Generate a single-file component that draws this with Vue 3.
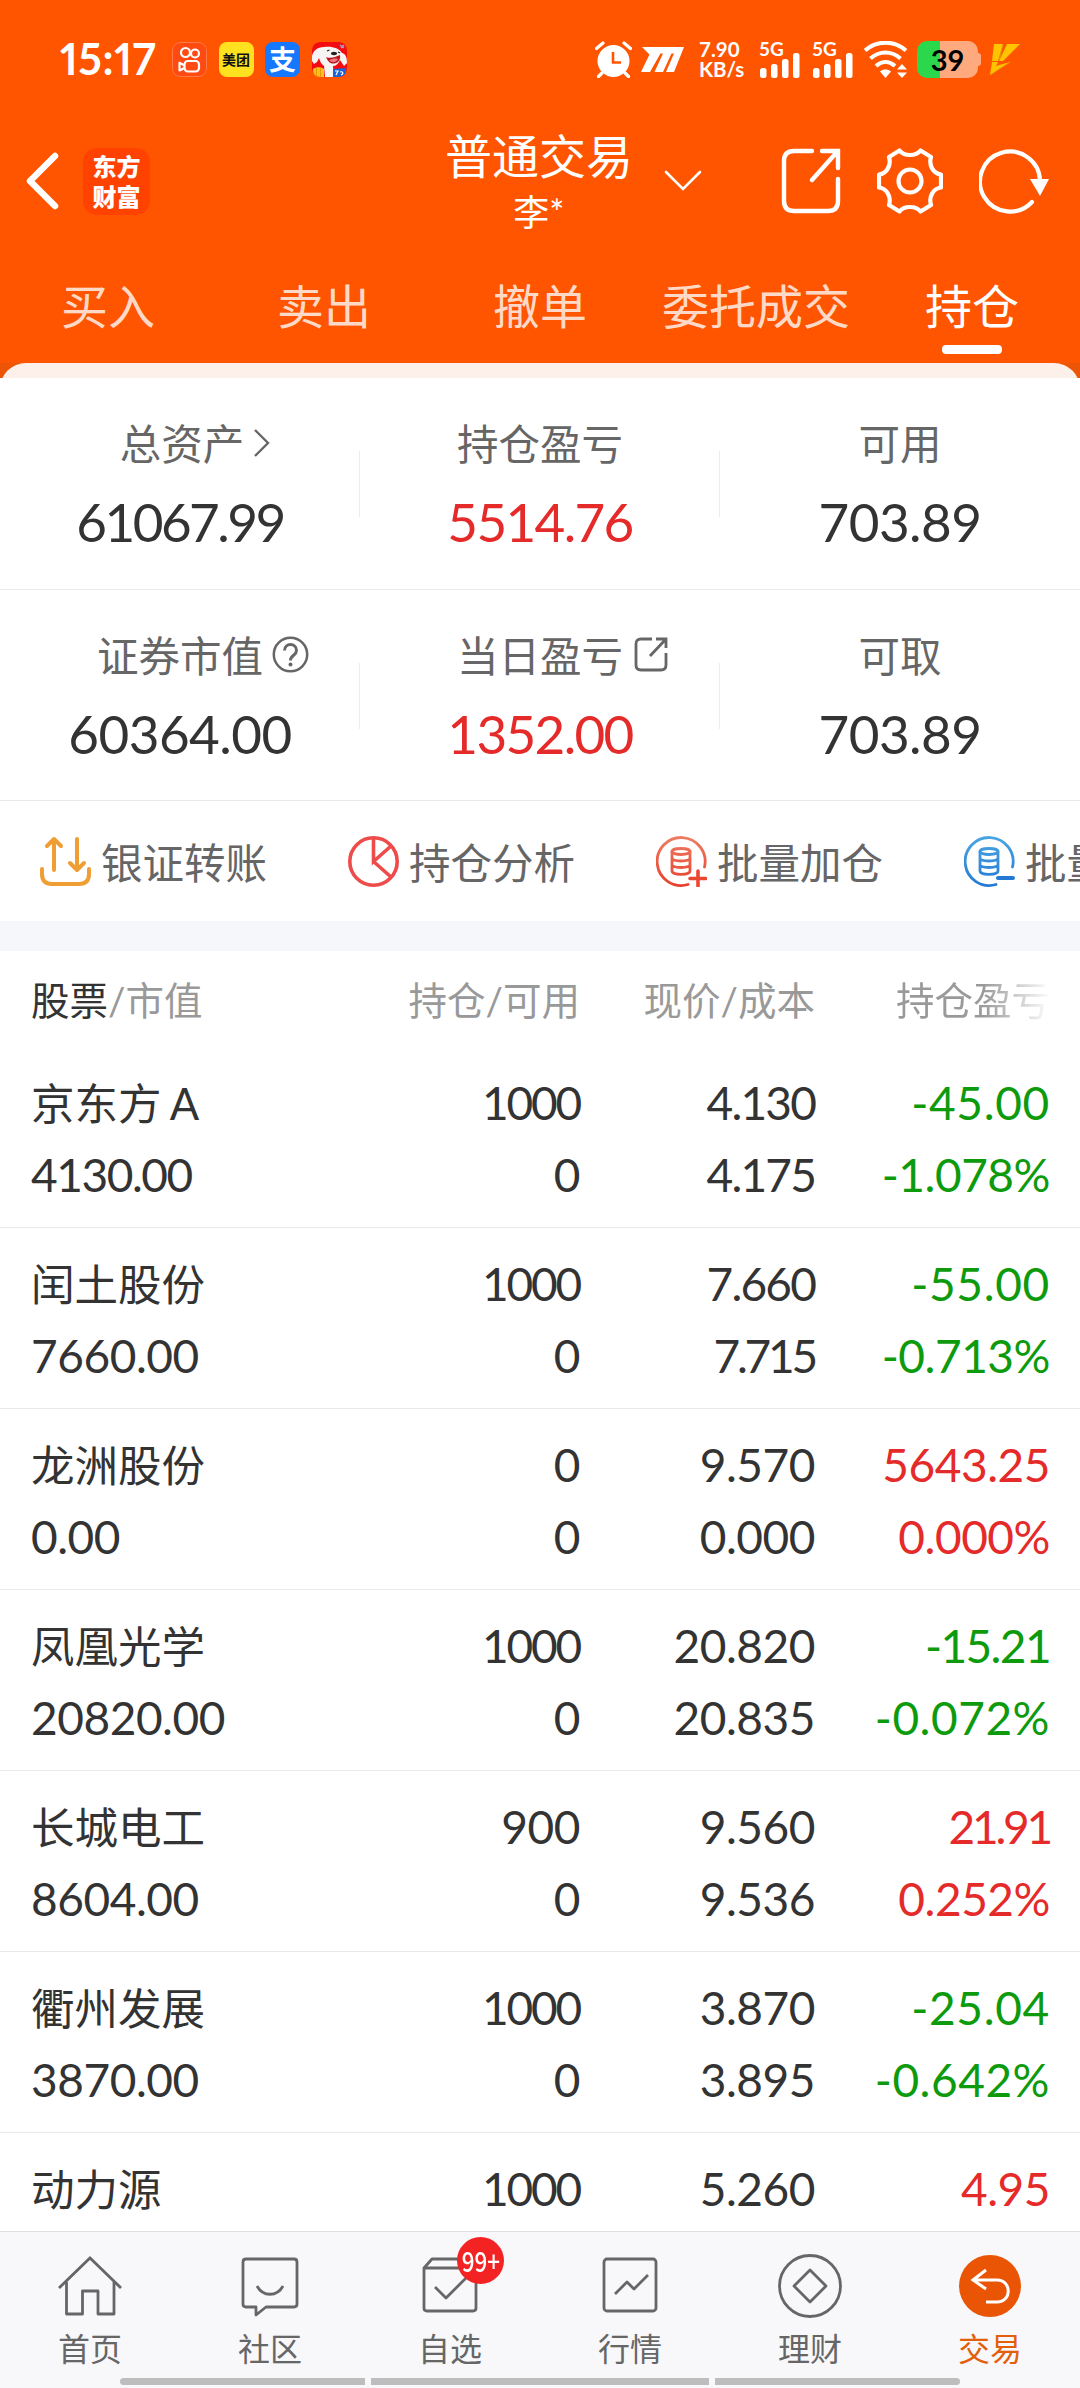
<script setup>
const tabs = ['买入', '卖出', '撤单', '委托成交', '持仓']

const summary = [
  [
    { label: '总资产', value: '61067.99', icon: 'arrow' },
    { label: '持仓盈亏', value: '5514.76', tone: 'up' },
    { label: '可用', value: '703.89' },
  ],
  [
    { label: '证券市值', value: '60364.00', icon: 'help' },
    { label: '当日盈亏', value: '1352.00', tone: 'up', icon: 'share' },
    { label: '可取', value: '703.89' },
  ],
]

const actions = [
  { key: 'transfer', label: '银证转账' },
  { key: 'pie', label: '持仓分析' },
  { key: 'plus', label: '批量加仓' },
  { key: 'minus', label: '批量减仓' },
]

const stocks = [
  { name: '京东方 A', market: '4130.00', hold: '1000', usable: '0', price: '4.130', cost: '4.175', profit: '-45.00', rate: '-1.078%', tone: 'down' },
  { name: '闰土股份', market: '7660.00', hold: '1000', usable: '0', price: '7.660', cost: '7.715', profit: '-55.00', rate: '-0.713%', tone: 'down' },
  { name: '龙洲股份', market: '0.00', hold: '0', usable: '0', price: '9.570', cost: '0.000', profit: '5643.25', rate: '0.000%', tone: 'up' },
  { name: '凤凰光学', market: '20820.00', hold: '1000', usable: '0', price: '20.820', cost: '20.835', profit: '-15.21', rate: '-0.072%', tone: 'down' },
  { name: '长城电工', market: '8604.00', hold: '900', usable: '0', price: '9.560', cost: '9.536', profit: '21.91', rate: '0.252%', tone: 'up' },
  { name: '衢州发展', market: '3870.00', hold: '1000', usable: '0', price: '3.870', cost: '3.895', profit: '-25.04', rate: '-0.642%', tone: 'down' },
  { name: '动力源', market: '', hold: '1000', usable: '', price: '5.260', cost: '', profit: '4.95', rate: '', tone: 'up' },
]

const navs = [
  { key: 'home', label: '首页' },
  { key: 'chat', label: '社区' },
  { key: 'pick', label: '自选', badge: '99+' },
  { key: 'quote', label: '行情' },
  { key: 'wealth', label: '理财' },
  { key: 'trade', label: '交易' },
]

// tighten numbers holding a narrow "1" or "7.", loosen the ones with a minus sign
function tracking(value, step = 0.15) {
  if (!value) return {}
  const narrow = (value.match(/1|7\./g) || []).length
  const wide = value.startsWith('-') ? 1 : 0
  const em = ((wide - narrow) * step) / value.length - 0.01
  return { letterSpacing: `${em.toFixed(4)}em` }
}
</script>

<template>
  <div class="page">
    <header class="top">
      <div class="status-bar">
        <span class="clock">15:17</span>
        <div class="app-icons">
          <svg class="app-icon" viewBox="0 0 35 35">
            <rect x=".5" y=".5" width="34" height="34" rx="8" fill="#ff4a12" stroke="#ff7a48" />
            <g fill="none" stroke="#fff" stroke-width="2.2">
              <circle cx="13.500" cy="10.500" r="4.500" />
              <circle cx="23" cy="11.500" r="4" />
              <rect x="12.500" y="19" width="14.500" height="10.500" rx="3.400" />
              <path d="M12.500 23.500 7.500 20.700v7.800l5-2.600" stroke-linejoin="round" />
            </g>
          </svg>
          <span class="app-icon meituan">美团</span>
          <span class="app-icon alipay">支</span>
          <svg class="app-icon" viewBox="0 0 35 35">
            <rect width="35" height="35" rx="8" fill="#f30b12" />
            <path d="M0 14c1-5 5-9 12-9 8-1 15 1 18 6 4 1 5 5 5 10l-3 3-4-6c-2 4-4 6-7 6l1 11H13l-1-11c-3-2-4-5-5-8l-2 4-3 2-2-3z" fill="#f7f4f4" />
            <path d="M14 15c5 2 9 0 14-2 1 6-3 8.500-7 8.500-3 0-5-2-7-6.500z" fill="#b8161c" />
            <path d="M17 18.500c3-2 6-2.500 9-1.500-2 4-6 4-9 1.500z" fill="#f0747c" />
            <ellipse cx="22" cy="11.500" rx="3" ry="1.700" fill="#222" />
            <path d="M15 9l2.500-1M26 10l2 1" stroke="#222" stroke-width="1.300" />
            <path d="M1 27c3-2.500 8-2.500 11 0v8H6c-4 0-5-4-5-8z" fill="#ffbe1d" />
            <path d="M4.500 26v9M8.500 26v9" stroke="#e79b0a" />
            <path d="M21 27l13-1c1 5-2 9-7 9h-6z" fill="#1d63d8" />
            <path d="M23 29h3l-2 4M28 30c3-1 4 2 1 3" fill="none" stroke="#fff" stroke-width="1.200" />
            <path d="M28 3l4 3m0-3-3 3" stroke="#9fa8d8" stroke-width="1.500" />
          </svg>
        </div>
        <div class="status-right">
          <svg class="alarm" width="37" height="37" viewBox="0 0 37 37">
            <circle cx="18.500" cy="20" r="16" fill="#fff" />
            <path d="M1.500 7.500 8 2M35.500 7.500 29 2M7 32l-3.500 3.500M30 32l3.500 3.500" stroke="#fff" stroke-width="3.200" stroke-linecap="round" />
            <path d="M18 11v10.500h8" fill="none" stroke="#ff5500" stroke-width="2.600" />
          </svg>
          <svg class="mmm" width="43" height="25" viewBox="0 0 43 25" fill="#fff">
            <path d="M1 0H43L33 25H25L33 6.500H30.500L22 25H13.500L22 6.500H19.500L9 25H0L8.500 7.500z" />
          </svg>
          <div class="net-speed"><b>7.90</b><b>KB/s</b></div>
          <div v-for="n in 2" :key="n" class="signal">
            <b>5G</b>
            <svg width="41" height="25" viewBox="0 0 41 25" fill="#fff">
              <rect x="1" y="15" width="6.500" height="10" rx="2.500" />
              <rect x="12" y="11" width="6.500" height="14" rx="2.500" />
              <rect x="23" y="6" width="6.500" height="19" rx="2.500" />
              <rect x="34" y="0" width="6.500" height="25" rx="2.500" />
            </svg>
          </div>
          <svg class="wifi" width="44" height="37" viewBox="0 0 44 37">
            <g fill="none" stroke="#fff" stroke-width="4">
              <path d="M1 9.500C13-1 30-1 42 9.500" />
              <path d="M6.500 17.500c9-8 21-8 30 0" />
              <path d="M12 25c6-5.500 13-5.500 19 0" />
            </g>
            <path d="M16 30.500c3.500-2.600 7.500-2.600 11 0L21.500 37zM33 28.500l5-5.500 5 5.500zM33 31.500h10L38 37z" fill="#fff" />
          </svg>
          <div class="battery"><b>39</b></div>
          <svg class="bolt" width="30" height="31" viewBox="0 0 30 31">
            <path d="M4 0H13L8 17H2zM17 0H30L13 17H9zM2 18H8L6 22 20 18 0 31z" fill="#ffc400" />
            <path d="M13 0 9 17M20 18 0 31" stroke="#e89a00" />
          </svg>
        </div>
      </div>

      <div class="title-bar">
        <svg class="back" width="33" height="58" viewBox="0 0 33 58">
          <path d="M29 4 4 29 29 54" fill="none" stroke="#fff" stroke-width="6.500" stroke-linecap="round" stroke-linejoin="round" />
        </svg>
        <div class="brand">东方<br>财富</div>
        <div class="account">
          <h1>普通交易</h1>
          <p>李*</p>
        </div>
        <svg class="caret" width="38" height="22" viewBox="0 0 38 22">
          <path d="M2 2 19 19 36 2" fill="none" stroke="#fff" stroke-width="2.600" stroke-linecap="round" />
        </svg>
        <div class="tools">
          <svg width="60" height="66" viewBox="0 0 60 66" fill="none" stroke="#fff" stroke-width="4.400" stroke-linecap="round">
            <path d="M31 3H13Q3 3 3 13V53Q3 63 13 63H47Q57 63 57 53V31" />
            <path d="M41 3H57V20M56 4 31 32" />
          </svg>
          <svg width="66" height="66" viewBox="0 0 66 66" fill="none" stroke="#fff" stroke-width="4.200" stroke-linejoin="round">
            <path d="M22.500 2.500C27 8.500 39 8.500 43.500 2.500L54 9C51.500 17 56 25.500 64 26.500V39.500C56 40.500 51.500 49 54 57L43.500 63.500C39 57.500 27 57.500 22.500 63.500L12 57C14.500 49 10 40.500 2 39.500V26.500C10 25.500 14.500 17 12 9Z" />
            <circle cx="33" cy="33" r="11.500" />
          </svg>
          <svg width="71" height="66" viewBox="0 0 71 66" fill="none">
            <path d="M53 54A30 30 0 1 1 61 33" stroke="#fff" stroke-width="4.200" stroke-linecap="round" />
            <path d="M51 31H70L61 48Z" fill="#fff" />
          </svg>
        </div>
      </div>

      <nav class="tabs">
        <span v-for="tab in tabs" :key="tab" class="tab" :class="{ active: tab === '持仓' }">{{ tab }}</span>
      </nav>
      <div class="sheet-edge"><div class="sheet-top" /></div>
    </header>

    <section v-for="(row, i) in summary" :key="i" class="summary-row">
      <div v-for="cell in row" :key="cell.label" class="summary-cell">
        <div class="summary-label">
          <span>{{ cell.label }}</span>
          <svg v-if="cell.icon === 'arrow'" class="label-arrow" width="18" height="30" viewBox="0 0 18 30">
            <path d="M2 2 15 15 2 28" fill="none" stroke="#666" stroke-width="2.400" />
          </svg>
          <svg v-else-if="cell.icon === 'help'" class="label-help" width="37" height="37" viewBox="0 0 37 37" fill="none" stroke="#666" stroke-width="2.500">
            <circle cx="18.500" cy="18.500" r="16.700" />
            <path d="M12.500 14.500c0-8 12-8 12 0 0 5-6 4.500-6 10" stroke-width="3" />
            <circle cx="18.500" cy="28.500" r="2" fill="#666" stroke="none" />
          </svg>
          <svg v-else-if="cell.icon === 'share'" class="label-share" width="34" height="35" viewBox="0 0 34 35" fill="none" stroke="#666" stroke-width="2.800">
            <path d="M18 2H7Q2 2 2 7V28Q2 33 7 33H27Q32 33 32 28V16" />
            <path d="M22 2H32V11M32 2 16 19" />
          </svg>
        </div>
        <div class="summary-value" :class="cell.tone" :style="tracking(cell.value)">{{ cell.value }}</div>
      </div>
    </section>

    <section class="actions">
      <div v-for="item in actions" :key="item.key" class="action">
        <svg v-if="item.key === 'transfer'" width="51" height="51" viewBox="0 0 51 51" fill="none" stroke="#ee9e32" stroke-width="4" stroke-linecap="round" stroke-linejoin="round">
          <path d="M2 33v5q0 10 10 10H39q10 0 10-10v-5" />
          <path d="M14 34V3M7 10l7-7 7 7M37 3V34M30 27l7 7 7-7" />
        </svg>
        <svg v-else-if="item.key === 'pie'" width="51" height="51" viewBox="0 0 51 51" fill="none" stroke="#ee4b4b" stroke-width="3.600">
          <circle cx="25.500" cy="25.500" r="23.700" />
          <path d="M25.500 2V25.500L43 10M25.500 25.500 43 41" />
        </svg>
        <svg v-else width="51" height="51" viewBox="0 0 51 51" fill="none" :stroke="item.key === 'plus' ? 'url(#gradPlus)' : 'url(#gradMinus)'" stroke-width="2.800" stroke-linecap="round">
          <defs>
            <linearGradient id="gradPlus" x1="0" y1="0" x2="0" y2="51" gradientUnits="userSpaceOnUse">
              <stop offset="0" stop-color="#ee7d63" /><stop offset="1" stop-color="#e83f2d" />
            </linearGradient>
            <linearGradient id="gradMinus" x1="0" y1="0" x2="0" y2="51" gradientUnits="userSpaceOnUse">
              <stop offset="0" stop-color="#4aa6e2" /><stop offset="1" stop-color="#2379d4" />
            </linearGradient>
          </defs>
          <path d="M48.500 31A24 24 0 1 0 32 48.500" />
          <ellipse cx="25" cy="15.500" rx="9" ry="3" />
          <path d="M16 15.500V35c0 4.500 18 4.500 18 0V15.500M16 22c0 4 18 4 18 0M16 28.500c0 4 18 4 18 0" />
          <path v-if="item.key === 'plus'" d="M34 42.500H49.500M42 35V50" stroke="#ea4632" stroke-width="3.600" />
          <path v-else d="M34 42H49" stroke="#2379d4" stroke-width="4" />
        </svg>
        <span>{{ item.label }}</span>
      </div>
    </section>

    <div class="band" />

    <section class="holdings">
      <div class="grid-row table-head">
        <span><em>股票</em>/市值</span>
        <span>持仓/可用</span>
        <span>现价/成本</span>
        <span class="fade-out">持仓盈亏</span>
      </div>
      <div v-for="stock in stocks" :key="stock.name" class="stock">
        <div class="grid-row line">
          <span class="name">{{ stock.name }}</span>
          <span :style="tracking(stock.hold)">{{ stock.hold }}</span>
          <span :style="tracking(stock.price)">{{ stock.price }}</span>
          <span :class="stock.tone" :style="tracking(stock.profit)">{{ stock.profit }}</span>
        </div>
        <div class="grid-row line">
          <span :style="tracking(stock.market)">{{ stock.market }}</span>
          <span :style="tracking(stock.usable)">{{ stock.usable }}</span>
          <span :style="tracking(stock.cost)">{{ stock.cost }}</span>
          <span :class="stock.tone" :style="tracking(stock.rate)">{{ stock.rate }}</span>
        </div>
      </div>
    </section>

    <footer class="bottom">
      <nav class="bottom-nav">
        <div v-for="item in navs" :key="item.key" class="nav-item" :class="{ current: item.key === 'trade' }">
          <div class="nav-icon">
            <svg width="66" height="66" viewBox="0 0 66 66" fill="none" stroke="#666" stroke-width="2.800" stroke-linejoin="round">
              <template v-if="item.key === 'home'">
                <path d="M2 34 33 4 64 34" stroke-linejoin="miter" />
                <path d="M9.500 28V60H25.500V37H41V60H57V28" />
              </template>
              <template v-else-if="item.key === 'chat'">
                <path d="M9 5H57Q60 5 60 8V50Q60 53 57 53H29L19 61V53H9Q6 53 6 50V8Q6 5 9 5Z" />
                <path d="M20 32c6 11 20 11 26 0" />
              </template>
              <template v-else-if="item.key === 'pick'">
                <path d="M7 14V54Q7 57 10 57H56Q59 57 59 54V14L51 5H15L7 14H59" />
                <path d="M18 33 29 44 49 24" />
              </template>
              <template v-else-if="item.key === 'quote'">
                <rect x="7" y="5" width="52" height="52" rx="3" />
                <path d="M18 40 30 28 37 35 51 21" />
              </template>
              <template v-else-if="item.key === 'wealth'">
                <circle cx="33" cy="32" r="30.500" />
                <path d="M33 16 49 32 33 48 17 32Z" />
              </template>
              <template v-else>
                <circle cx="33" cy="32" r="31" fill="#e95504" stroke="none" />
                <path d="M29 16 16 26 29 35M17 26H40C55 26 55 48 40 48H29" stroke="#fff" stroke-width="3" stroke-linejoin="miter" />
              </template>
            </svg>
            <span v-if="item.badge" class="badge"><b>{{ item.badge }}</b></span>
          </div>
          <span class="nav-label">{{ item.label }}</span>
        </div>
      </nav>
      <div class="gesture"><i /><i /><i /></div>
    </footer>
  </div>
</template>

<style>
body {
  margin: 0;
  background: #fff;
}
</style>

<style scoped>
.page {
  display: flex;
  flex-direction: column;
  box-sizing: border-box;
  width: 1080px;
  height: 2388px;
  overflow: hidden;
  background: #fff;
  color: #333;
  font-family: Lato, 'Noto Sans CJK SC', sans-serif;
}

svg {
  display: block;
  flex: none;
}

.top {
  flex: none;
  height: 378px;
  background: #ff5500;
  color: #fff;
}

.status-bar {
  display: flex;
  align-items: center;
  height: 118px;
  padding: 0 60px;
}

.clock {
  width: 112px;
  font-size: 43px;
  font-weight: 700;
  font-variant-numeric: proportional-nums;
  line-height: 44px;
  letter-spacing: 0.6px;
}

.app-icons {
  display: flex;
  gap: 11.500px;
}

.app-icon {
  width: 35px;
  height: 35px;
  border-radius: 8px;
  text-align: center;
  font-family: 'Noto Sans CJK SC', sans-serif;
  font-weight: 700;
}

.meituan {
  background: #ffe21f;
  color: #111;
  font-size: 14px;
  line-height: 35px;
}

.alipay {
  background: #1677ff;
  font-size: 27px;
  line-height: 33px;
}

.status-right {
  display: flex;
  align-items: center;
  margin-left: auto;
}

.mmm {
  margin-left: 9px;
}

.net-speed {
  display: flex;
  flex-direction: column;
  width: 46px;
  margin-left: 15px;
  font-size: 20.500px;
  line-height: 20px;
}

.signal {
  display: flex;
  flex-direction: column;
  width: 41px;
  height: 37px;
  margin-left: 14px;
}

.signal + .signal {
  margin-left: 12px;
}

.signal b {
  height: 12px;
  font-size: 19px;
  line-height: 15px;
}

.wifi {
  margin-left: 11px;
}

.battery {
  position: relative;
  width: 61px;
  height: 37px;
  margin: 0 12px 0 9px;
  border-radius: 10px;
  background: linear-gradient(90deg, #2bd84c 23px, #ffa97f 23px);
  color: #000;
  text-align: center;
  font-size: 29px;
  line-height: 37px;
}

.battery::after {
  position: absolute;
  top: 12px;
  right: -3px;
  width: 3px;
  height: 13px;
  border-radius: 0 3px 3px 0;
  background: #ffa97f;
  content: '';
}

.title-bar {
  display: flex;
  align-items: center;
  height: 126px;
  padding: 0 30px 0 26px;
}

.brand {
  box-sizing: border-box;
  width: 67px;
  height: 67px;
  margin-left: 24px;
  padding-top: 3px;
  border-radius: 14px;
  background: #ff4200;
  text-align: center;
  font-family: 'Noto Sans CJK SC', sans-serif;
  font-size: 24px;
  font-weight: 900;
  line-height: 30px;
}

.account {
  width: 200px;
  margin-left: 289px;
  padding-top: 6px;
  text-align: center;
}

.account h1 {
  margin: 0;
  font-size: 47px;
  font-weight: 400;
  line-height: 56px;
  white-space: nowrap;
}

.account p {
  margin: 0;
  font-size: 36px;
  line-height: 57px;
}

.caret {
  margin-left: 25px;
}

.tools {
  display: flex;
  align-items: center;
  gap: 36px;
  margin-left: auto;
}

.tabs {
  display: grid;
  grid-template-columns: repeat(5, 1fr);
  height: 119px;
}

.tab {
  display: flex;
  flex-direction: column;
  align-items: center;
  padding-top: 32px;
  color: rgba(255, 255, 255, 0.8);
  font-size: 47px;
  line-height: 60px;
}

.tab.active {
  color: #fff;
}

.tab.active::after {
  width: 60px;
  height: 9px;
  margin-top: 9px;
  border-radius: 4px;
  background: #fff;
  content: '';
}

.sheet-edge {
  height: 15px;
  overflow: hidden;
  background: #ec5506;
}

.sheet-top {
  height: 40px;
  border-radius: 26px 26px 0 0;
  background: #fdf0ea;
}

.summary-row {
  display: grid;
  flex: none;
  grid-template-columns: repeat(3, 1fr);
  box-sizing: border-box;
  height: 211px;
  border-bottom: 1px solid #eaeaea;
}

.summary-row:nth-of-type(1) {
  height: 212px;
}

.summary-cell {
  background: linear-gradient(#ececec, #ececec) right 73px / 1px 66px no-repeat;
  text-align: center;
}

.summary-cell:last-child {
  background: none;
}

.summary-label {
  display: flex;
  align-items: center;
  justify-content: center;
  height: 60px;
  padding-top: 36px;
  color: #666;
  font-size: 41.500px;
  line-height: 60px;
}

/* label text stays centred, the trailing icon hangs past it */
.label-arrow {
  margin: -3px -31px 0 9px;
}

.label-help {
  margin: -4px -46px 0 9px;
}

.label-share {
  margin: -4px -45px 0 11px;
}

.summary-value {
  height: 60px;
  margin-top: 18px;
  font-size: 53px;
  line-height: 60px;
}

.up {
  color: #e52a2a;
}

.down {
  color: #0d9a0d;
}

.actions {
  display: flex;
  flex: none;
  gap: 80px;
  height: 120px;
  padding-left: 40px;
  overflow: hidden;
}

.action {
  display: flex;
  flex: none;
  align-items: center;
  gap: 10px;
  width: 228px;
  color: #666;
  font-size: 41.500px;
  white-space: nowrap;
}

.band {
  flex: none;
  height: 30px;
  background: #f6f7fa;
}

.holdings {
  flex: 1;
  min-height: 0;
  overflow: hidden;
}

.grid-row {
  display: grid;
  grid-template-columns: 349px 200px 235px 235px;
  padding-left: 31px;
  text-align: right;
}

.grid-row > span:first-child {
  text-align: left;
}

.table-head {
  height: 96px;
  color: #999;
  font-size: 38.500px;
  line-height: 98px;
}

.table-head em {
  color: #333;
  font-style: normal;
}

.fade-out {
  background: linear-gradient(90deg, #999 168px, #fff 236px);
  background-clip: text;
  color: transparent;
}

.stock {
  box-sizing: border-box;
  height: 181px;
  padding-top: 20px;
  border-bottom: 1px solid #eaeaea;
}

.line {
  height: 72px;
  font-size: 46px;
  line-height: 72px;
}

.line .name {
  font-size: 43.500px;
  word-spacing: -3px;
}

.bottom {
  flex: none;
  box-sizing: border-box;
  height: 157px;
  border-top: 1px solid #dfdfe2;
  background: #f8f8fb;
}

.bottom-nav {
  display: grid;
  grid-template-columns: repeat(6, 1fr);
  height: 146px;
}

.nav-item {
  display: flex;
  flex-direction: column;
  align-items: center;
  padding-top: 22px;
  color: #666;
}

.nav-icon {
  position: relative;
  height: 66px;
}

.nav-label {
  font-size: 32px;
  line-height: 57px;
}

.current .nav-label {
  color: #e2600c;
}

.badge {
  position: absolute;
  top: -17px;
  left: 40px;
  display: flex;
  justify-content: center;
  width: 47px;
  height: 47px;
  border-radius: 50%;
  background: #f42323;
  color: #fff;
  font-family: 'Noto Sans CJK SC', sans-serif;
  font-size: 28px;
  line-height: 47px;
}

.badge b {
  font-weight: 500;
  transform: scaleX(0.8);
}

.gesture {
  display: flex;
  justify-content: center;
  gap: 6px;
}

.gesture i {
  width: 245px;
  height: 7px;
  background: #bdbdbd;
}

.gesture i:first-child {
  border-radius: 4px 0 0 4px;
}

.gesture i:nth-child(2) {
  width: 338px;
}

.gesture i:last-child {
  border-radius: 0 4px 4px 0;
}
</style>
